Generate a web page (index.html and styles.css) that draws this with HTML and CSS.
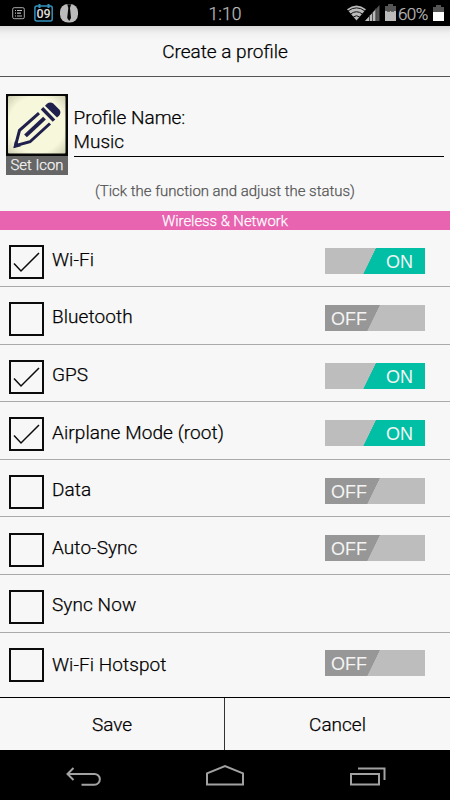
FILE: index.html
```html
<!DOCTYPE html>
<html lang="en">
<head>
<meta charset="utf-8">
<title>Create a profile</title>
<link rel="stylesheet" href="styles.css">
</head>
<body>
<div class="statusbar">
  <svg class="notifications" width="80" height="26" viewBox="0 0 80 26" fill="none">
    <rect x="12.7" y="7.7" width="11.6" height="11" rx="1.5" stroke="#aaa"/>
    <path d="M15 10.5h1M17 10.5h5M15 13.2h1M17 13.2h4M15 16h1M17 16h5" stroke="#bbb" stroke-width="1.2"/>
    <rect x="34.9" y="6" width="17.3" height="15" rx="2" stroke="#3293bd" stroke-width="1.5"/>
    <path d="M39.5 4v4M48.5 4v4" stroke="#3293bd" stroke-width="2"/>
    <text class="calendar-day" x="43.6" y="17.7" text-anchor="middle">09</text>
    <rect x="60" y="4" width="18" height="18.5" rx="8" fill="#bbb"/>
    <path d="M67.2 4.2h4L70 8l1 10-1.8 3-2-3L68.3 8z" fill="#080808"/>
  </svg>
  <span class="clock">1:10</span>
  <div class="indicators">
    <svg width="50" height="26" viewBox="0 0 50 26">
      <path d="M0 9.2Q9.500 1.800 19 9.200L9.500 20.600Z" fill="#bbb"/>
      <path d="M1 11Q9.500 4.700 18 11M3.500 14Q9.500 9.500 15.500 14M6.300 17Q9.500 14.500 12.700 17" fill="none" stroke="#111" stroke-width="1"/>
      <path d="M18 21L32.500 5v16z" fill="#555"/>
      <path d="M18 21L29 9v12z" fill="#bbb"/>
      <path d="M22.500 15v6M25.500 12v9M28.800 8v13" stroke="#333" stroke-width=".8"/>
      <path d="M38 6h3V4h5v2h3v15H38z" fill="#555"/>
      <path d="M38 11h11v10H38z" fill="#bbb"/>
      <path d="M40 11.300h3M44 11.300h3" stroke="#555"/>
    </svg>
    <span class="percent">60%</span>
    <svg width="12" height="26" viewBox="0 0 12 26">
      <path d="M0 7h3V5h5v2h3v5H0z" fill="#555"/>
      <path d="M0 12h11v9H0z" fill="#fff"/>
    </svg>
  </div>
</div>
<header class="titlebar"><h1>Create a profile</h1></header>
<section class="profile">
  <div class="profile-icon">
    <svg width="62" height="62" viewBox="0 0 62 63" preserveAspectRatio="none">
      <defs>
        <radialGradient id="paper" r=".75"><stop offset=".65" stop-color="#f7f7dc"/><stop offset="1" stop-color="#c5c5a9"/></radialGradient>
      </defs>
      <rect width="62" height="63" fill="#070707"/>
      <rect x="2" y="2" width="57.500" height="58.500" rx="1" fill="url(#paper)"/>
      <g fill="none" stroke="#20204c">
        <path d="M33 19.500L13.500 37 9.500 52.500 24 48.500 44 30" stroke-width="3"/>
        <path d="M38.500 24.500L19.500 42.500" stroke-width="4"/>
        <path d="M36 14.500L48 27" stroke-width="3.500"/>
      </g>
      <path d="M7.500 55l1.500-7.500 6 5.500z" fill="#20204c"/>
      <path d="M39 12l2-2q3-2.500 6-.500l6.500 6.500q2 3-.500 6l-2 2z" fill="#20204c"/>
    </svg>
    <span class="set-icon">Set Icon</span>
  </div>
  <div class="name-field">
    <label>Profile Name:</label>
    <div class="name-value">Music</div>
  </div>
</section>
<p class="hint">(Tick the function and adjust the status)</p>
<h2 class="section-title">Wireless &amp; Network</h2>
<main class="settings">
  <div class="row"><span class="box"><svg width="31" height="30"><path d="M3 16.500l7 7.500L28 6" /></svg></span><span class="label">Wi-Fi</span><span class="toggle on">ON</span></div>
  <div class="row"><span class="box"></span><span class="label">Bluetooth</span><span class="toggle">OFF</span></div>
  <div class="row"><span class="box"><svg width="31" height="30"><path d="M3 16.500l7 7.500L28 6" /></svg></span><span class="label">GPS</span><span class="toggle on">ON</span></div>
  <div class="row"><span class="box"><svg width="31" height="30"><path d="M3 16.500l7 7.500L28 6" /></svg></span><span class="label">Airplane Mode (root)</span><span class="toggle on">ON</span></div>
  <div class="row"><span class="box"></span><span class="label">Data</span><span class="toggle">OFF</span></div>
  <div class="row"><span class="box"></span><span class="label">Auto-Sync</span><span class="toggle">OFF</span></div>
  <div class="row"><span class="box"></span><span class="label">Sync Now</span></div>
  <div class="row"><span class="box"></span><span class="label">Wi-Fi Hotspot</span><span class="toggle">OFF</span></div>
</main>
<footer class="actions"><div class="action">Save</div><div class="action">Cancel</div></footer>
<nav class="navbar">
  <svg width="450" height="50" viewBox="0 0 450 50" fill="none" stroke="#a2a2a2" stroke-width="2">
    <path d="M73.500 18l-6 6 6 6M68 24h26.500a5.300 5.300 0 0 1 0 10.700H81.500"/>
    <path d="M207 34.500V23.300L225 16l18 7.300v11.200z"/>
    <path d="M351 24h28v10.500h-28zM358 18.500h26.500V30"/>
  </svg>
</nav>
</body>
</html>
```
FILE: styles.css
```css
* { box-sizing: border-box; }
body {
  margin: 0;
  width: 450px;
  height: 800px;
  overflow: hidden;
  display: flex;
  flex-direction: column;
  background: #f7f7f7;
  color: #000;
  font-family: Roboto, "Liberation Sans", sans-serif;
  font-size: 19px;
  font-weight: 300;
  -webkit-text-stroke: .25px currentColor;
}
svg { display: block; }
h1, h2, p { margin: 0; font-weight: inherit; }
.statusbar {
  height: 26px;
  flex: none;
  display: grid;
  grid-template-columns: 1fr auto 1fr;
  background: #000;
  color: #bbb;
  line-height: 28px;
}
.calendar-day { font: 500 12.500px Roboto, sans-serif; fill: #ddd; }
.clock { font-size: 17.500px; }
.indicators { display: flex; justify-content: flex-end; padding-right: 5px; }
.percent { font-size: 17px; margin: 0 2px 0 1px; width: 33px; white-space: nowrap; letter-spacing: -.6px; }
.indicators svg { flex: none; }
.titlebar {
  height: 51px;
  flex: none;
  border-bottom: 1px solid #555;
  background: linear-gradient(#d9d9d9, #f0f0f0 7px, #f7f7f7 14px);
  text-align: center;
}
.titlebar h1 { font-size: 19px; line-height: 52px; }
.profile { flex: none; height: 98px; padding: 17px 6px 0; display: flex; gap: 5.500px; }
.profile-icon { width: 62px; }
.set-icon {
  display: block;
  height: 19px;
  background: #666;
  color: #f4f4f4;
  text-align: center;
  font-size: 14.800px;
  line-height: 19px;
}
.name-field { flex: 1; height: 63px; padding-top: 12px; border-bottom: 1px solid #000; line-height: 24px; }
.hint { flex: none; height: 36px; line-height: 33px; text-align: center; font-size: 14.950px; color: #555; }
.section-title { flex: none; height: 19px; line-height: 20px; background: #e964b0; color: #fff; text-align: center; font-size: 14.800px; }
.settings { flex: none; height: 467px; }
.row {
  height: 57.600px;
  display: flex;
  align-items: flex-start;
  padding: 0 25px 0 9px;
  border-bottom: 1px solid #aaa;
}
.row:first-child { height: 57px; }
.row:last-child { border-bottom: 0; }
.box { flex: none; width: 35px; height: 34px; margin-top: 15.300px; border: 2px solid #0b0b0b; }
.box path { fill: none; stroke: #0b0b0b; stroke-width: 1.500; }
.label { flex: 1; margin: 18.400px 0 0 8px; line-height: 24px; letter-spacing: .08px; }
.row:last-child .label { margin-top: 20.400px; }
.toggle {
  width: 100px;
  height: 26px;
  margin-top: 18px;
  padding-left: 6px;
  background: linear-gradient(116deg, #979797 48.5%, #bdbdbd 49%);
  color: #f4f4f4;
  font-family: "Liberation Sans", sans-serif;
  font-size: 18px;
  line-height: 28px;
  -webkit-text-stroke: 0;
}
.toggle.on {
  padding-left: 61px;
  background: linear-gradient(116deg, #bdbdbd 45%, #00bfa5 45.500%);
}
.row:last-child .toggle { margin-top: 17px; }
.actions { flex: none; height: 53px; display: flex; border-top: 1px solid #000; text-align: center; line-height: 54px; }
.action { width: 224px; }
.action + .action { width: 226px; border-left: 1px solid #333; }
.navbar { flex: none; height: 50px; background: #000; }
```
